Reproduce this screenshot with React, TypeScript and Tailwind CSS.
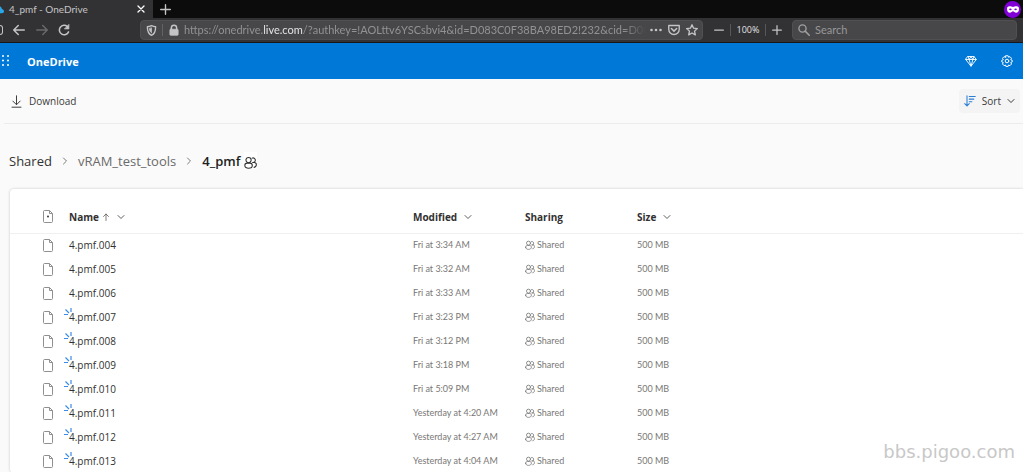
import type { ReactNode } from "react";

const files = [
  { name: "4.pmf.004", modified: "Fri at 3:34 AM", isNew: false },
  { name: "4.pmf.005", modified: "Fri at 3:32 AM", isNew: false },
  { name: "4.pmf.006", modified: "Fri at 3:33 AM", isNew: false },
  { name: "4.pmf.007", modified: "Fri at 3:23 PM", isNew: true },
  { name: "4.pmf.008", modified: "Fri at 3:12 PM", isNew: true },
  { name: "4.pmf.009", modified: "Fri at 3:18 PM", isNew: true },
  { name: "4.pmf.010", modified: "Fri at 5:09 PM", isNew: true },
  { name: "4.pmf.011", modified: "Yesterday at 4:20 AM", isNew: true },
  { name: "4.pmf.012", modified: "Yesterday at 4:27 AM", isNew: true },
  { name: "4.pmf.013", modified: "Yesterday at 4:04 AM", isNew: true },
];

type IconProps = { className?: string; children?: ReactNode };

// Shared 16x16 stroke icon shell
function Icon({ className = "size-4", children }: IconProps) {
  return (
    <svg
      viewBox="0 0 16 16"
      fill="none"
      stroke="currentColor"
      strokeLinecap="round"
      strokeLinejoin="round"
      aria-hidden="true"
      className={`shrink-0 ${className}`}
    >
      {children}
    </svg>
  );
}

function Chevron({ className = "size-2" }: IconProps) {
  return (
    <Icon className={className}>
      <path d="M2 5l6 6 6-6" strokeWidth="2" />
    </Icon>
  );
}

function PeopleIcon({ className }: IconProps) {
  return (
    <Icon className={className}>
      <circle cx="5.6" cy="5" r="3.2" strokeWidth="1.3" />
      <path d="M1 11.6c0-1.800 1.200-2.800 2.800-2.800h3.600c1.600 0 2.800 1 2.800 2.800 0 2.200-2 3.400-4.600 3.400S1 13.800 1 11.600z" strokeWidth="1.3" />
      <path d="M10 2.600a2.800 2.800 0 1 1 .6 5.300h2c1.600 0 2.600 1 2.600 2.600 0 2-1.200 3.200-2.800 3.500" strokeWidth="1.3" />
    </Icon>
  );
}

function FileIcon({ dot = false }: { dot?: boolean }) {
  return (
    <svg viewBox="0 0 10 13" fill="none" stroke="#8f8f8f" aria-hidden="true" className="h-[13px] w-[10px]">
      <path d="M1.5.5h5l3 3v8a1 1 0 0 1-1 1h-7a1 1 0 0 1-1-1v-10a1 1 0 0 1 1-1z" />
      <path d="M6.500.5v3h3" />
      {dot && <circle cx="5" cy="6.500" r=".9" fill="#222" stroke="none" />}
    </svg>
  );
}

function BrowserChrome() {
  return (
    <div className="bg-[#323234] text-[#c4c4c6]">
      <div className="flex h-[18px] items-center overflow-hidden bg-[#0c0c0d]">
        <div className="flex h-full w-[153px] items-center bg-[#323234]">
          <svg viewBox="0 0 4 12" aria-hidden="true" className="h-3 w-1 shrink-0">
            <path d="M0 3.500c1.300.2 1.500 1.500 2 2.500 1.300.4 2 1.300 2 2.300 0 1.200-.8 1.900-2 1.900H0z" fill="#28a8ea" />
          </svg>
          <span className="ml-[5px] flex-1 font-['Lato','Open_Sans',sans-serif] text-[10px] leading-4">
            4_pmf - OneDrive
          </span>
          <button aria-label="Close tab" className="mr-2 text-white">
            <Icon className="size-2">
              <path d="M2 2l12 12M14 2L2 14" strokeWidth="2.6" />
            </Icon>
          </button>
        </div>
        <button aria-label="New tab" className="ml-[7px]">
          <Icon className="size-[11px]">
            <path d="M8 1v14M1 8h14" strokeWidth="2" />
          </Icon>
        </button>
        <span className="mr-[2px] ml-auto flex size-[17px] shrink-0 items-center justify-center rounded-full bg-[#8000d7]">
          <svg viewBox="0 0 12 7" aria-hidden="true" className="h-[7px] w-3">
            <path d="M2.500.3C4 .3 5 1 6 1s2-.7 3.500-.7C11.300.3 12 1.300 12 3c0 2.300-1.200 3.700-2.800 3.700C7.500 6.700 7 5.200 6 5.200s-1.500 1.500-3.200 1.500C1.200 6.700 0 5.300 0 3 0 1.300.7.3 2.500.3z" fill="#fff" />
            <ellipse cx="3.400" cy="3.300" rx="1.300" ry=".9" fill="#8000d7" />
            <ellipse cx="8.600" cy="3.300" rx="1.300" ry=".9" fill="#8000d7" />
          </svg>
        </span>
      </div>

      <div className="flex h-[25px] items-center border-b border-[#17171a]">
        <div className="flex w-[140px] shrink-0 items-center">
          <span className="h-[10px] w-[3px] rounded-r-sm border border-l-0 border-[#c4c4c6]" />
          <button aria-label="Back" className="ml-[10px]">
            <Icon className="size-3">
              <path d="M15 8H1M7 2L1 8l6 6" strokeWidth="2" />
            </Icon>
          </button>
          <button aria-label="Forward" className="ml-[11px] text-[#69696c]">
            <Icon className="size-3">
              <path d="M1 8h14M9 2l6 6-6 6" strokeWidth="2" />
            </Icon>
          </button>
          <button aria-label="Reload" className="ml-[10px]">
            <Icon className="size-3">
              <path d="M14 10.500A6.300 6.300 0 1 1 12.500 3.500" strokeWidth="2" />
              <path d="M14.500 1v5.500H9z" fill="currentColor" strokeWidth="1" />
            </Icon>
          </button>
        </div>
        <div className="flex h-5 w-[563px] items-center rounded-sm border border-[#505053] bg-[#474749] pr-1 pl-[5px]">
          <Icon className="size-[11px]">
            <path d="M8 1c2 1 4 1.500 6 1.500C14 9 12.500 13 8 15 3.500 13 2 9 2 2.500 4 2.500 6 2 8 1z" strokeWidth="2" />
            <path d="M8 4.500v7C6 10 5 8 5 5.500z" fill="currentColor" />
          </Icon>
          <span className="mx-[5px] h-3 w-px bg-[#626265]" />
          <Icon className="size-3">
            <path d="M4.500 7V5a3.500 3.500 0 0 1 7 0v2" strokeWidth="2" />
            <rect x="2.500" y="7" width="11" height="8" rx="1" fill="currentColor" />
          </Icon>
          <div
            role="textbox"
            aria-label="Address"
            tabIndex={0}
            className="ml-1 min-w-0 flex-1 mask-r-from-95% font-['Lato','Open_Sans',sans-serif] text-[11px] leading-4 whitespace-nowrap text-[#929295]"
          >
            https://onedrive.<span className="text-[#e2e2e4]">live.com</span>
            /?authkey=!AOLttv6YSCsbvi4&amp;id=D083C0F38BA98ED2!232&amp;cid=D08
          </div>
          <button aria-label="Page actions" className="ml-1">
            <Icon className="size-3">
              <path d="M2 8h.01M8 8h.01M14 8h.01" strokeWidth="3.500" />
            </Icon>
          </button>
          <button aria-label="Save to Pocket" className="ml-[6px]">
            <Icon className="size-3">
              <path d="M1 2h14v5a7 7 0 0 1-14 0z" strokeWidth="1.800" />
              <path d="M4.500 6L8 9.500 11.500 6" strokeWidth="2" />
            </Icon>
          </button>
          <button aria-label="Bookmark" className="ml-[6px]">
            <Icon className="size-3">
              <path d="M8 1l2.100 4.600 5 .5-3.700 3.400 1 5L8 12l-4.400 2.500 1-5L.9 6.100l5-.5z" strokeWidth="1.800" />
            </Icon>
          </button>
        </div>
        <div className="ml-[11px] flex w-[68px] shrink-0 items-center justify-between">
          <button aria-label="Zoom out">
            <Icon className="size-[10px]">
              <path d="M1 8h14" strokeWidth="2" />
            </Icon>
          </button>
          <span className="h-3 w-px bg-[#58585b]" />
          <span className="text-[9px] leading-4 text-[#e2e2e4]">100%</span>
          <span className="h-3 w-px bg-[#58585b]" />
          <button aria-label="Zoom in">
            <Icon className="size-[10px]">
              <path d="M8 1v14M1 8h14" strokeWidth="2" />
            </Icon>
          </button>
        </div>
        <label className="mr-[6px] ml-[10px] flex h-5 min-w-0 flex-1 items-center rounded-sm border border-[#505053] bg-[#474749] pl-[5px]">
          <Icon className="size-3 text-[#a0a0a3]">
            <circle cx="6" cy="6" r="4.800" strokeWidth="1.800" />
            <path d="M9.500 9.500L15 15" strokeWidth="2" />
          </Icon>
          <input
            aria-label="Search"
            placeholder="Search"
            className="ml-[5px] min-w-0 flex-1 bg-transparent font-['Lato','Open_Sans',sans-serif] text-[11px] leading-4 outline-none placeholder:text-[#98989b]"
          />
        </label>
      </div>
    </div>
  );
}

function SuiteHeader() {
  return (
    <header className="flex h-9 items-center bg-[#0078d7] text-white">
      <button aria-label="App launcher" className="ml-[2px]">
        <svg viewBox="0 0 8 12" fill="currentColor" aria-hidden="true" className="h-3 w-2">
          {[1, 5.5, 10].map((y) => (
            <g key={y}>
              <circle cx="1" cy={y} r="1" />
              <circle cx="6" cy={y} r="1" />
            </g>
          ))}
        </svg>
      </button>
      <a href="#" className="ml-[17px] pt-[2px] text-[11px] leading-4 font-bold">
        OneDrive
      </a>
      <button aria-label="Premium" className="ml-auto">
        <Icon className="size-3">
          <path d="M4 2h8l3 4-7 9-7-9zM1 6h14M4 2l1.500 4L8 15l2.500-9L12 2M5.500 6L8 2l2.500 4" strokeWidth="1.200" />
        </Icon>
      </button>
      <button aria-label="Settings" className="mr-[10px] ml-6">
        <Icon className="size-3">
          <path d="M6.500 1h3l.5 2 2-.8 2 2.200-1 2 2 .8v2l-2 .8 1 2-2 2.200-2-.8-.5 1.800h-3L6 13.400l-2 .8L2 12l1-2-2-.8v-2l2-.8-1-2 2-2.200 2 .8z" strokeWidth="1.300" />
          <circle cx="8" cy="8" r="2.400" strokeWidth="1.300" />
        </Icon>
      </button>
    </header>
  );
}

function CommandBar() {
  return (
    <div className="ml-1 flex h-[45px] items-center border-b border-[#ececec] text-[10px] leading-4 text-[#3b3a39]">
      <button className="ml-[6px] flex items-center gap-[6px]">
        <Icon className="size-[13px]">
          <path d="M8 1v10.500M3.500 7.500L8 12l4.500-4.500M2.500 15h11" strokeWidth="1.200" />
        </Icon>
        Download
      </button>
      <button className="mr-[3px] ml-auto flex h-6 items-center rounded-sm bg-[#f4f4f4] px-[5px]">
        <Icon className="mr-[6px] size-3 text-[#2b7cd3]">
          <path d="M4 1v13.500M1 11.500l3 3 3-3M7 2h8M7 5.500h6M7 9h3.500" strokeWidth="1.400" />
        </Icon>
        Sort
        <Chevron className="ml-[6px] size-2" />
      </button>
    </div>
  );
}

function Breadcrumb() {
  return (
    <nav aria-label="Breadcrumb" className="flex h-[65px] items-center px-[9px] pt-2 text-[13px] leading-5 text-[#323130]">
      <a href="#">Shared</a>
      <Chevron className="mx-[9px] size-2 -rotate-90 text-[#7a7a7a]" />
      <a href="#" className="text-[#6b6a69]">
        vRAM_test_tools
      </a>
      <Chevron className="mx-[9px] size-2 -rotate-90 text-[#7a7a7a]" />
      <span className="font-semibold text-[#201f1e]">4_pmf</span>
      <span className="ml-1 bg-white pt-1">
        <PeopleIcon className="size-[13px]" />
      </span>
    </nav>
  );
}

function HeaderCell({ label, sortable = true, ascending = false }: { label: string; sortable?: boolean; ascending?: boolean }) {
  return (
    <th scope="col" className="p-0 pb-2 text-left align-bottom">
      <button className="flex items-center text-[10px] leading-4 font-bold">
        {label}
        {ascending && (
          <Icon className="ml-[3px] size-2 text-[#605e5c]">
            <path d="M8 15V2M3 7l5-5 5 5" strokeWidth="1.600" />
          </Icon>
        )}
        {sortable && <Chevron className="ml-[7px] size-2 text-[#605e5c]" />}
      </button>
    </th>
  );
}

function FileTable() {
  return (
    <table className="w-full table-fixed border-collapse">
      <colgroup>
        <col className="w-[59px]" />
        <col className="w-[344px]" />
        <col className="w-[112px]" />
        <col className="w-[112px]" />
        <col />
      </colgroup>
      <thead>
        <tr className="h-[44px] border-b border-[#f0f0f0] text-[#323130]">
          <th scope="col" aria-label="Type" className="p-0 pb-[10px] pl-[33px] align-bottom">
            <FileIcon dot />
          </th>
          <HeaderCell label="Name" ascending />
          <HeaderCell label="Modified" />
          <HeaderCell label="Sharing" sortable={false} />
          <HeaderCell label="Size" />
        </tr>
      </thead>
      <tbody className="font-['Lato','Open_Sans',sans-serif] text-[9px] leading-4 text-[#797775]">
        {files.map((file) => (
          <tr key={file.name} className="h-6">
            <td className="p-0 pl-[33px]">
              <FileIcon />
            </td>
            <td className="p-0 font-['Open_Sans','Noto_Sans',sans-serif] text-[10px]">
              <a href="#" className="relative text-[#323130]">
                {file.isNew && (
                  <svg viewBox="0 0 8 8" fill="none" stroke="#3b8be8" strokeWidth="1.2" aria-hidden="true" className="absolute -top-[2px] -left-[5px] size-2">
                    <path d="M0 6.500h4M1.500 1.500L5 5M7 0v4" />
                  </svg>
                )}
                {file.name}
              </a>
            </td>
            <td className="p-0">{file.modified}</td>
            <td className="p-0">
              <span className="flex items-center gap-[2px]">
                <PeopleIcon className="size-[10px]" />
                Shared
              </span>
            </td>
            <td className="p-0">500 MB</td>
          </tr>
        ))}
      </tbody>
    </table>
  );
}

export default function App() {
  return (
    <div className="relative h-screen overflow-hidden bg-[#fafafa] font-['Open_Sans','Noto_Sans',sans-serif]">
      <BrowserChrome />
      <SuiteHeader />
      <CommandBar />
      <Breadcrumb />
      <main className="ml-[10px] rounded-l-sm bg-white shadow-[0_0_3px_rgba(0,0,0,0.2)]">
        <FileTable />
      </main>
      <span className="absolute right-2 bottom-2 font-['DejaVu_Sans',sans-serif] text-[18px] leading-6 text-[#c8c8c8]">
        bbs.pigoo.com
      </span>
    </div>
  );
}
